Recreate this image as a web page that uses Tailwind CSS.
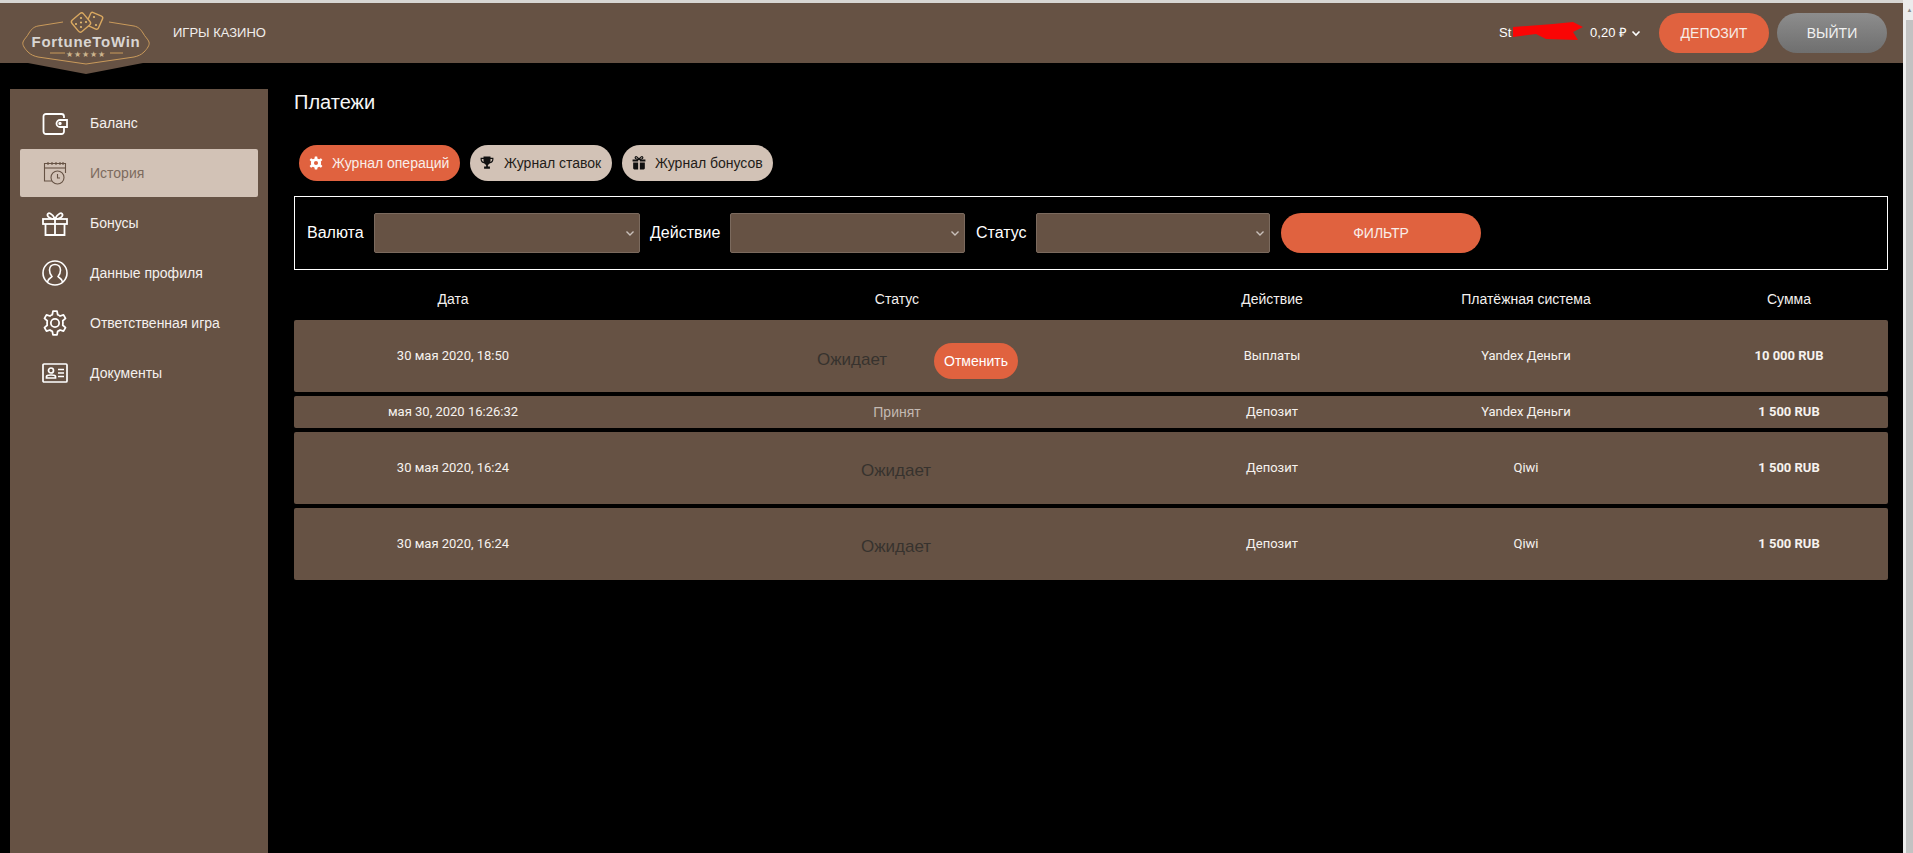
<!DOCTYPE html>
<html lang="ru">
<head>
    <meta charset="UTF-8">
    <meta name="viewport" content="width=device-width, initial-scale=1.0">
    <title>Платежи</title>
    <script src="https://cdn.jsdelivr.net/npm/@tailwindcss/browser@4"></script>
</head>
<body class="bg-black text-white h-[853px] overflow-hidden font-['Liberation_Sans',sans-serif]">
<div class="flex h-[853px]">
    <div class="w-[1903px] flex flex-col">
        <div class="h-[3px] bg-[#d8d6d3]"></div>
        <!-- header -->
        <header class="relative h-[60px] bg-[#665244] flex items-center pl-[173px] pr-[16px]">
            <div class="absolute left-[15px] top-[5px] w-[140px] h-[70px]">
                <svg viewBox="15 8 140 70" class="w-full h-full" fill="none">
                    <path d="M28 62 H143 V63 L86 74 L28 63 Z" fill="#665244"/>
                    <path d="M63 22 L38 26 C33 27 31 30 29 33 C27 37 24 39 23 42 C22 45 25 49 28 52 C31 55 34 56 38 57 L86 64 L134 57 C138 56 141 55 144 52 C147 49 150 45 149 42 C148 39 145 37 143 33 C141 30 139 27 134 26 L109 22" stroke="#c99a5b" stroke-width="1"/>
                    <rect x="88" y="14" width="13" height="14" rx="2" transform="rotate(24 95 21)" stroke="#d9a860" stroke-width="1.400"/>
                    <rect x="73.500" y="15" width="15" height="15" rx="2.500" transform="rotate(-40 81 22.500)" stroke="#d9a860" stroke-width="1.400" fill="#665244"/>
                    <circle cx="76" cy="24" r="1.100" fill="#e4b96f"/><circle cx="81" cy="18" r="1.100" fill="#e4b96f"/><circle cx="81" cy="27" r="1.100" fill="#e4b96f"/><circle cx="86" cy="22" r="1.100" fill="#e4b96f"/><circle cx="81" cy="22.500" r="1.100" fill="#e4b96f"/><circle cx="94" cy="17" r="1.100" fill="#e4b96f"/><circle cx="96" cy="25" r="1.100" fill="#e4b96f"/>
                    <path d="M50 53 H65 M110 53 H123" stroke="#c99a5b"/>
                </svg>
                <span class="absolute left-[16px] top-[25px] w-[110px] text-center text-[15px] leading-[18px] font-bold text-[#d9d5d2] tracking-[0.7px]">FortuneToWin</span>
                <span class="absolute left-[46px] top-[42px] w-[50px] text-center text-[8px] leading-[9px] text-[#cdb48d] tracking-[1px]">★★★★★</span>
            </div>
            <span class="text-[13px] text-[#f1eeec]">ИГРЫ КАЗИНО</span>
            <div class="ml-auto flex items-center">
                <div class="relative text-[13px] flex items-center w-[142px]">
                    <span>St</span>
                    <svg class="absolute left-[14px] top-[-1px]" width="70" height="20" viewBox="0 0 70 20"><path d="M0 5 L40 2 L60 0 L70 5 L60 10 L65 18 L33 17 L23 12 L0 15 Z" fill="#fa0505"/></svg>
                    <span class="ml-auto">0,20 ₽</span>
                    <svg class="ml-[4px]" width="10" height="10" viewBox="0 0 10 10" fill="none"><path d="M1.500 3.500 L5 7 L8.500 3.500" stroke="#fff" stroke-width="1.600"/></svg>
                </div>
                <button class="ml-[18px] w-[110px] h-[40px] rounded-full bg-[#e0623f] text-[14px] text-[#f7ece7]">ДЕПОЗИТ</button>
                <button class="ml-[8px] w-[110px] h-[40px] rounded-full bg-gradient-to-b from-[#8d8d8d] to-[#6f6f6f] text-[14px] text-[#f1f1f1]">ВЫЙТИ</button>
            </div>
        </header>

        <div class="flex flex-1 pt-[26px]">
            <!-- sidebar -->
            <aside class="ml-[10px] w-[258px] bg-[#665244] pt-[9px] px-[10px]">
                <a class="h-[51px] flex items-center text-[14px] text-[#f4f0ee]">
                    <span class="w-[26px] ml-[22px] flex justify-center"><svg width="26" height="22" viewBox="0 0 26 22" fill="none" stroke="#fff" stroke-width="1.800"><path d="M22 5 V3.500 A2.500 2.500 0 0 0 19.500 1 H4 A2.500 2.500 0 0 0 1.500 3.500 V18.500 A2.500 2.500 0 0 0 4 21 H19.500 A2.500 2.500 0 0 0 22 18.500 V15"/><path d="M25 7 H18 A3.500 3.500 0 0 0 18 14 H25 Z"/><circle cx="18" cy="10.500" r="0.800"/></svg></span>
                    <span class="ml-[22px]">Баланс</span>
                </a>
                <a class="h-[48px] flex items-center text-[14px] text-[#7d6b5e] bg-[#d2c2b6] rounded-[2px]">
                    <span class="w-[26px] ml-[22px] flex justify-center"><svg width="24" height="24" viewBox="0 0 24 24" fill="none" stroke="#665244" stroke-width="1.100"><path d="M9 20 H1.500 V2.500 H22.500 V12"/><path d="M1.500 7 H22.500"/><path d="M5 1 V4 M9 1 V4 M13 1 V4 M17 1 V4 M20 1 V4"/><circle cx="14.500" cy="16.500" r="6.500"/><path d="M14.500 13 V17 H17"/></svg></span>
                    <span class="ml-[22px]">История</span>
                </a>
                <a class="h-[51px] pt-[2px] flex items-center text-[14px] text-[#f4f0ee]">
                    <span class="w-[26px] ml-[22px] flex justify-center"><svg width="26" height="24" viewBox="0 0 26 24" fill="none" stroke="#fff" stroke-width="1.800"><rect x="1" y="7" width="24" height="5"/><path d="M3.500 12 V23 H22.500 V12 M13 7 V23"/><path d="M13 7 C10 1 6 0 5.500 2.500 C5 5 9 7 13 7 C17 7 21 5 20.500 2.500 C20 0 16 1 13 7 Z"/></svg></span>
                    <span class="ml-[22px]">Бонусы</span>
                </a>
                <a class="h-[50px] flex items-center text-[14px] text-[#f4f0ee]">
                    <span class="w-[26px] ml-[22px] flex justify-center"><svg width="26" height="26" viewBox="0 0 26 26" fill="none" stroke="#fff" stroke-width="1.600"><circle cx="13" cy="13" r="12"/><path d="M5.500 22 C6 18 9.500 18 10 16.500 C8 14.500 7.500 12.500 7.500 10 C7.500 6.500 10 4.500 13 4.500 C16 4.500 18.500 6.500 18.500 10 C18.500 12.500 18 14.500 16 16.500 C16.500 18 20 18 20.500 22"/></svg></span>
                    <span class="ml-[22px]">Данные профиля</span>
                </a>
                <a class="h-[50px] flex items-center text-[14px] text-[#f4f0ee]">
                    <span class="w-[26px] ml-[22px] flex justify-center"><svg width="26" height="26" viewBox="2 1 20 22" fill="none" stroke="#fff" stroke-width="1.500"><circle cx="12" cy="12" r="3.500"/><path d="M10.300 2 H13.700 L14.300 5 C15 5.300 15.700 5.600 16.300 6.100 L19.200 5.100 L20.900 8.100 L18.600 10.100 C18.700 11 18.700 13 18.600 13.900 L20.900 15.900 L19.200 18.900 L16.300 17.900 C15.700 18.400 15 18.700 14.300 19 L13.700 22 H10.300 L9.700 19 C9 18.700 8.300 18.400 7.700 17.900 L4.800 18.900 L3.100 15.900 L5.400 13.900 C5.300 13 5.300 11 5.400 10.100 L3.100 8.100 L4.800 5.100 L7.700 6.100 C8.300 5.600 9 5.300 9.700 5 Z" stroke-linejoin="round"/></svg></span>
                    <span class="ml-[22px]">Ответственная игра</span>
                </a>
                <a class="h-[50px] flex items-center text-[14px] text-[#f4f0ee]">
                    <span class="w-[26px] ml-[22px] flex justify-center"><svg width="26" height="20" viewBox="0 0 26 20" fill="none" stroke="#fff" stroke-width="1.700"><rect x="1" y="1" width="24" height="18" rx="1"/><circle cx="9" cy="7.500" r="2.500"/><path d="M4.500 15 V13.500 C4.500 11.500 13.500 11.500 13.500 13.500 V15 Z"/><path d="M16 6.500 H22 M16 10 H22 M16 13.500 H22"/></svg></span>
                    <span class="ml-[22px]">Документы</span>
                </a>
            </aside>

            <!-- content -->
            <main class="ml-[26px] w-[1594px]">
                <h1 class="text-[20px] leading-[26px] text-[#f6f6f6]">Платежи</h1>
                <div class="flex gap-[10px] ml-[5px] mt-[30px]">
                    <button class="h-[36px] w-[161px] rounded-full bg-[#e0623f] flex items-center pl-[10px] text-[14px] text-[#f9eee9]">
                        <svg width="14" height="14" viewBox="0 0 24 24" fill="#fff"><path d="M10 1 H14 L14.700 4.500 L17.500 5.700 L20.500 3.700 L23 7 L20.300 9.500 L20.700 12 L20.300 14.500 L23 17 L20.500 20.300 L17.500 18.300 L14.700 19.500 L14 23 H10 L9.300 19.500 L6.500 18.300 L3.500 20.300 L1 17 L3.700 14.500 L3.300 12 L3.700 9.500 L1 7 L3.500 3.700 L6.500 5.700 L9.300 4.500 Z M12 8.500 A3.500 3.500 0 1 0 12 15.500 A3.500 3.500 0 1 0 12 8.500 Z" fill-rule="evenodd"/></svg>
                        <span class="ml-[9px]">Журнал операций</span>
                    </button>
                    <button class="h-[36px] w-[142px] rounded-full bg-[#d2c2b6] flex items-center pl-[10px] text-[14px] text-[#231c18]">
                        <svg width="14" height="14" viewBox="0 0 24 24" fill="#111"><path d="M6 1 H18 V3 H23 V6 C23 10 20 12 17 12.500 C16 14 14.500 15 13.500 15.300 V18 H17 V22 H7 V18 H10.500 V15.300 C9.500 15 8 14 7 12.500 C4 12 1 10 1 6 V3 H6 Z M3 5 V6 C3 8 4.500 9.500 6.300 10.200 C6 8.500 6 7 6 5 Z M21 5 H18 C18 7 18 8.500 17.700 10.200 C19.500 9.500 21 8 21 6 Z" fill-rule="evenodd"/></svg>
                        <span class="ml-[10px]">Журнал ставок</span>
                    </button>
                    <button class="h-[36px] w-[151px] rounded-full bg-[#d2c2b6] flex items-center pl-[10px] text-[14px] text-[#231c18]">
                        <svg width="14" height="14" viewBox="0 0 24 24" fill="#111"><path d="M2 11 H10.500 V23 H4 A2 2 0 0 1 2 21 Z M13.500 11 H22 V21 A2 2 0 0 1 20 23 H13.500 Z M1 6 H10.500 V9.500 H1 Z M13.500 6 H23 V9.500 H13.500 Z"/><path d="M12 6 C9 1 6 0 5.500 2.500 C5 5 9 6 12 6 C15 6 19 5 18.500 2.500 C18 0 15 1 12 6 Z" fill="none" stroke="#111" stroke-width="2"/></svg>
                        <span class="ml-[9px]">Журнал бонусов</span>
                    </button>
                </div>
                <!-- filter -->
                <div class="mt-[15px] h-[74px] border border-white flex items-center pl-[12px]">
                    <span class="text-[16px] w-[67px]">Валюта</span>
                    <div class="w-[266px] h-[40px] bg-[#665244] border border-[#7b6a5e] rounded-[2px] flex items-center justify-end pr-[4px]"><svg width="10" height="10" viewBox="0 0 10 10" fill="none"><path d="M1.500 3.500 L5 7 L8.500 3.500" stroke="#c9c0ba" stroke-width="1.400"/></svg></div>
                    <span class="text-[16px] ml-[10px] w-[80px]">Действие</span>
                    <div class="w-[235px] h-[40px] bg-[#665244] border border-[#7b6a5e] rounded-[2px] flex items-center justify-end pr-[4px]"><svg width="10" height="10" viewBox="0 0 10 10" fill="none"><path d="M1.500 3.500 L5 7 L8.500 3.500" stroke="#c9c0ba" stroke-width="1.400"/></svg></div>
                    <span class="text-[16px] ml-[11px] w-[60px]">Статус</span>
                    <div class="w-[234px] h-[40px] bg-[#665244] border border-[#7b6a5e] rounded-[2px] flex items-center justify-end pr-[4px]"><svg width="10" height="10" viewBox="0 0 10 10" fill="none"><path d="M1.500 3.500 L5 7 L8.500 3.500" stroke="#c9c0ba" stroke-width="1.400"/></svg></div>
                    <button class="ml-[11px] w-[200px] h-[40px] rounded-full bg-[#e0623f] text-[14px] text-[#f9eee9]">ФИЛЬТР</button>
                </div>
                <!-- table -->
                <div class="grid grid-cols-[318px_570px_180px_328px_198px] h-[50px] pt-[8px] items-center text-center text-[14px] text-[#f4f0ee]">
                    <span>Дата</span><span>Статус</span><span>Действие</span><span>Платёжная система</span><span>Сумма</span>
                </div>
                <div class="flex flex-col gap-[4px] font-['Roboto',sans-serif] text-[13px] text-[#f6f2ef]">
                    <div class="grid grid-cols-[318px_570px_180px_328px_198px] h-[72px] items-center text-center bg-[#665244] rounded-[2px]">
                        <span>30 мая 2020, 18:50</span>
                        <span class="mt-[10px] flex items-center pl-[205px] font-['Liberation_Sans',sans-serif]"><span class="mb-[3px] w-[69px] text-[17px] whitespace-nowrap text-[#37322e]">Ожидает</span><span class="ml-[48px] w-[84px] h-[36px] leading-[36px] rounded-full bg-[#e0623f] text-[14px] text-white">Отменить</span></span>
                        <span>Выплаты</span><span>Yandex Деньги</span><span class="font-bold">10 000 RUB</span>
                    </div>
                    <div class="grid grid-cols-[318px_570px_180px_328px_198px] h-[32px] items-center text-center bg-[#665244] rounded-[2px]">
                        <span>мая 30, 2020 16:26:32</span><span class="text-[14px] text-[#c3b9b2] font-['Liberation_Sans',sans-serif]">Принят</span><span>Депозит</span><span>Yandex Деньги</span><span class="font-bold">1 500 RUB</span>
                    </div>
                    <div class="grid grid-cols-[318px_570px_180px_328px_198px] h-[72px] items-center text-center bg-[#665244] rounded-[2px]">
                        <span>30 мая 2020, 16:24</span><span class="mt-[6px] mr-[2px] text-[17px] text-[#37322e] font-['Liberation_Sans',sans-serif]">Ожидает</span><span>Депозит</span><span>Qiwi</span><span class="font-bold">1 500 RUB</span>
                    </div>
                    <div class="grid grid-cols-[318px_570px_180px_328px_198px] h-[72px] items-center text-center bg-[#665244] rounded-[2px]">
                        <span>30 мая 2020, 16:24</span><span class="mt-[6px] mr-[2px] text-[17px] text-[#37322e] font-['Liberation_Sans',sans-serif]">Ожидает</span><span>Депозит</span><span>Qiwi</span><span class="font-bold">1 500 RUB</span>
                    </div>
                </div>
            </main>
        </div>
    </div>
    <!-- scrollbar from the screenshot -->
    <div class="w-[10px] h-full bg-[#ececec] pl-[3px] flex flex-col">
        <div class="h-[20px] flex items-center justify-center text-[6px] text-[#888]">▲</div>
        <div class="flex-1 bg-[#c2c2c2]"></div>
    </div>
</div>
</body>
</html>
